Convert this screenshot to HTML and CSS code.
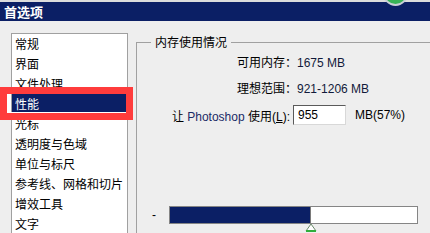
FILE: index.html
```html
<!DOCTYPE html>
<html lang="zh-CN">
<head>
<meta charset="utf-8">
<title>首选项</title>
<link rel="stylesheet" href="styles.css">
</head>
<body>
<div class="window">
  <div class="titlebar"><span class="title">首选项</span></div>
  <span class="orb"></span>
  <div class="main">
    <ul class="list">
      <li>常规</li>
      <li>界面</li>
      <li>文件处理</li>
      <li class="selected">性能</li>
      <li>光标</li>
      <li>透明度与色域</li>
      <li>单位与标尺</li>
      <li>参考线、网格和切片</li>
      <li>增效工具</li>
      <li>文字</li>
    </ul>
    <div class="content">
      <fieldset class="group">
        <legend class="legend">内存使用情况</legend>
        <div class="info first">可用内存：<span class="num">1675 MB</span></div>
        <div class="info second">理想范围：<span class="num">921-1206 MB</span></div>
        <div class="usage">
          <label class="usage-label">让 <span class="ps">Photoshop</span> 使用(<u>L</u>):</label>
          <input class="field" type="text" value="955">
          <span class="unit">MB(57%)</span>
        </div>
        <div class="meter">
          <span class="dash">-</span>
          <div class="bar">
            <div class="fill" style="width:57%"></div>
            <svg class="marker" width="12" height="9" viewBox="0 0 12 9">
              <polygon points="6,1 11,8 1,8" fill="#ffffff" stroke="#6a8a6a" stroke-width="1"/>
              <line x1="1" y1="8" x2="11" y2="8" stroke="#2fae3c" stroke-width="2"/>
            </svg>
          </div>
        </div>
      </fieldset>
    </div>
  </div>
  <div class="highlight"></div>
</div>
</body>
</html>
```
FILE: styles.css
```css
html, body {
  margin: 0;
  padding: 0;
}
body {
  width: 430px;
  height: 233px;
  overflow: hidden;
  background: #eeeeee;
  font-family: "Liberation Sans", "Noto Sans CJK SC", sans-serif;
  font-size: 12px;
  color: #000;
}
.window {
  position: relative;
  width: 430px;
  height: 233px;
  overflow: hidden;
}
.titlebar {
  height: 19px;
  border-top: 2px solid #dcdcdc;
  background: #0b1f65;
  display: flex;
  align-items: center;
  padding-left: 4px;
}
.title {
  color: #ffffff;
  font-weight: bold;
  font-size: 13px;
  line-height: 19px;
  font-family: "Noto Sans CJK SC", sans-serif;
}
.orb {
  position: absolute;
  left: 383px;
  top: -19px;
  width: 21px;
  height: 21px;
  border-radius: 50%;
  background: #37b356;
  border: 2px solid #c9cfd6;
}
.main {
  display: flex;
  padding-top: 12px;
}
.list {
  list-style: none;
  margin: 0 0 0 11px;
  padding: 0;
  width: 117px;
  height: 220px;
  box-sizing: border-box;
  border: 1px solid #a0a0a0;
  background: #ffffff;
  flex: none;
}
.list li {
  height: 20px;
  line-height: 20px;
  padding-left: 3px;
  white-space: nowrap;
  font-family: "Noto Sans CJK SC", sans-serif;
}
.list li.selected {
  background: #0b1f65;
  color: #ffffff;
}
.content {
  flex: 1;
  margin-left: 8px;
  margin-top: 2px;
  min-width: 0;
}
.group {
  margin: 0;
  padding: 0;
  border: none;
  border-top: 1px solid #a0a0a0;
  border-left: 1px solid #a0a0a0;
  height: 220px;
  min-width: 0;
}
.legend {
  margin-left: 14px;
  padding: 0 4px;
  line-height: 14px;
  font-family: "Noto Sans CJK SC", sans-serif;
}
.info {
  padding-left: 100px;
  line-height: 20px;
  white-space: nowrap;
  font-family: "Noto Sans CJK SC", sans-serif;
}
.info.first {
  margin-top: 3px;
}
.info.second {
  margin-top: 5px;
}
.num {
  font-family: "Liberation Sans", sans-serif;
  color: #111a3a;
}
.usage {
  margin-top: 6px;
  display: flex;
  align-items: center;
  height: 20px;
}
.usage-label {
  width: 153px;
  text-align: right;
  white-space: nowrap;
  flex: none;
}
.ps {
  color: #1b2a66;
}
.field {
  margin: 0 0 0 3px;
  width: 53px;
  height: 20px;
  box-sizing: border-box;
  padding: 0 0 0 4px;
  border: 1px solid;
  border-color: #5a5a5a #d8d8d8 #d8d8d8 #5a5a5a;
  background: #ffffff;
  font-family: "Liberation Sans", sans-serif;
  font-size: 12px;
  color: #000;
  outline: none;
}
.unit {
  margin-left: 9px;
  font-family: "Liberation Sans", sans-serif;
}
.meter {
  margin-top: 81px;
  display: flex;
  align-items: center;
  padding-left: 15px;
}
.dash {
  width: 17px;
  flex: none;
  line-height: 18px;
}
.bar {
  position: relative;
  width: 249px;
  height: 18px;
  box-sizing: border-box;
  border: 1px solid #858585;
  background: #ffffff;
  flex: none;
}
.fill {
  height: 100%;
  background: #0b1f65;
  border-right: 1px solid #7a7a7a;
  box-sizing: border-box;
}
.marker {
  position: absolute;
  left: calc(57% - 6px);
  top: 100%;
  display: block;
}
.highlight {
  position: absolute;
  left: 0;
  top: 87px;
  width: 133px;
  height: 33px;
  box-sizing: border-box;
  border: 7px solid #ff3c3c;
  box-shadow: inset 4px 0 0 #ffffff, inset 0 -1px 0 #ffffff;
}
```
